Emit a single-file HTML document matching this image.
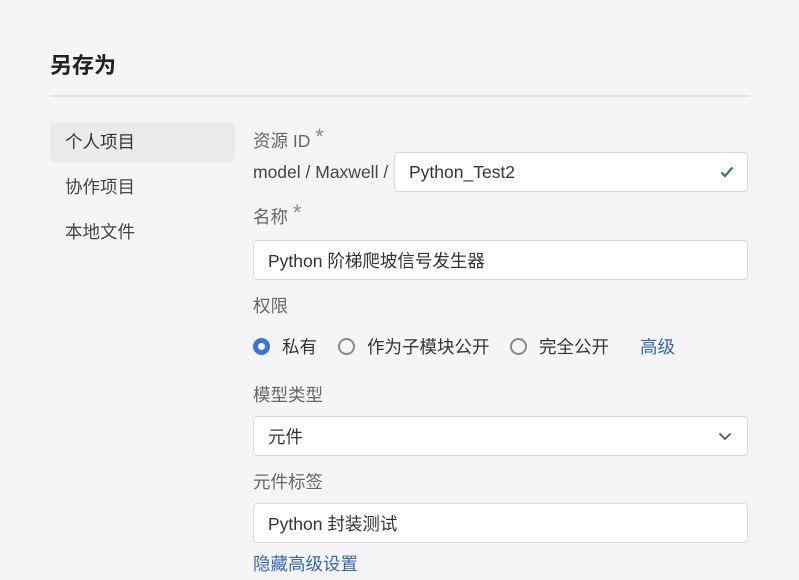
<!DOCTYPE html><html><head><meta charset="utf-8"><style>
*{box-sizing:border-box;margin:0;padding:0}
body{width:799px;height:580px;background:#f5f5f5;font-family:"Liberation Sans","Noto Sans CJK SC",sans-serif;color:#333;position:relative;overflow:hidden;font-size:17.5px}
.a{position:absolute;white-space:nowrap;line-height:22px}
.lbl{color:#666}
.inp{position:absolute;background:#fff;border:1px solid #d9d9d9;border-radius:4px;padding-left:14px;display:flex;align-items:center;color:#333}
.r{position:absolute;width:17px;height:17px;border:2px solid #888;border-radius:50%}
.star{color:#888;font-size:22px;position:relative;top:-3px}
</style></head><body>
<div class="a" style="left:50px;top:55px;font-size:22px;font-weight:bold;color:#222">另存为</div>
<div class="a" style="left:50px;top:95px;width:700px;height:2px;background:#e4e4e4"></div>
<div class="a" style="left:50px;top:122px;width:185px;height:40px;background:#ebebeb;border-radius:5px"></div>
<div class="a" style="left:65px;top:131px">个人项目</div>
<div class="a" style="left:65px;top:176px;color:#444">协作项目</div>
<div class="a" style="left:65px;top:221px;color:#444">本地文件</div>

<div class="a lbl" style="left:253px;top:129px">资源 ID <span class="star">*</span></div>
<div class="a" style="left:253px;top:161px;color:#444">model / Maxwell /</div>
<div class="inp" style="left:394px;top:152px;width:354px;height:40px">Python_Test2
<svg style="position:absolute;right:13px;top:13px" width="14" height="12" viewBox="0 0 14 12"><path d="M1.5 6.5L5 10L12.5 1.5" stroke="#2e7d4f" stroke-width="2.2" fill="none"/></svg></div>

<div class="a lbl" style="left:253px;top:205px">名称 <span class="star">*</span></div>
<div class="inp" style="left:253px;top:240px;width:495px;height:40px">Python 阶梯爬坡信号发生器</div>

<div class="a lbl" style="left:253px;top:295px">权限</div>
<div class="r" style="left:253px;top:338px;border:5px solid #3b73e0;background:#fff"></div>
<div class="a" style="left:282px;top:336px">私有</div>
<div class="r" style="left:338px;top:338px"></div>
<div class="a" style="left:367px;top:336px">作为子模块公开</div>
<div class="r" style="left:510px;top:338px"></div>
<div class="a" style="left:539px;top:336px">完全公开</div>
<div class="a" style="left:640px;top:336px;color:#3466b8">高级</div>

<div class="a lbl" style="left:253px;top:384px">模型类型</div>
<div class="inp" style="left:253px;top:416px;width:495px;height:40px">元件
<svg style="position:absolute;right:15px;top:15px" width="14" height="9" viewBox="0 0 14 9"><path d="M1.5 1.5L7 7L12.5 1.5" stroke="#555" stroke-width="1.8" fill="none"/></svg></div>

<div class="a lbl" style="left:253px;top:471px">元件标签</div>
<div class="inp" style="left:253px;top:503px;width:495px;height:40px">Python 封装测试</div>
<div class="a" style="left:253px;top:553px;color:#3466b8">隐藏高级设置</div>
</body></html>
